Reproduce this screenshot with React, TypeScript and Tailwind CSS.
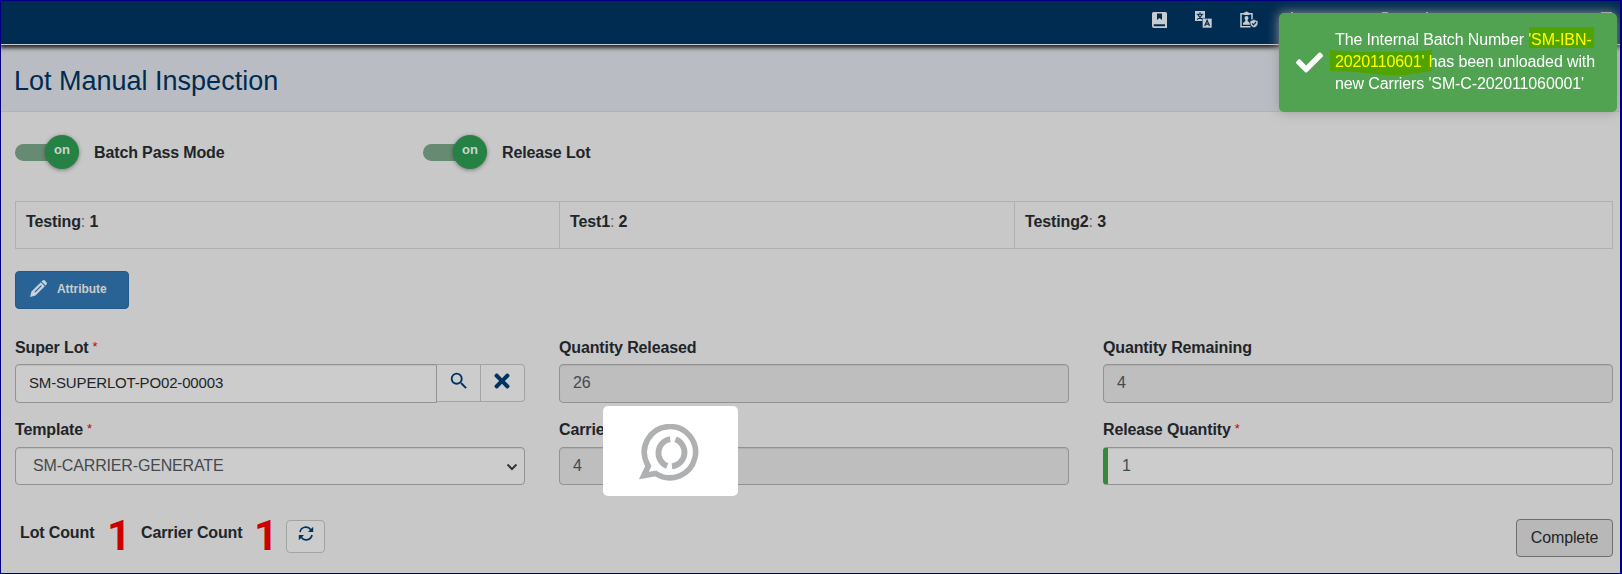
import type { ReactNode } from "react";
import { FaCheck, FaTimes } from "react-icons/fa";
import { MdSearch } from "react-icons/md";

function BookIcon() {
  return (
    <svg width="15" height="16" viewBox="0 0 15 16" fill="none">
      <path fillRule="evenodd" fill="#c6ccd0" d="M1.500 0H13.500A1.500 1.500 0 0 1 15 1.500V16H2A2 2 0 0 1 0 14V1.500A1.500 1.500 0 0 1 1.500 0ZM5 1.500V8L7.500 6L10 8V1.500ZM2.500 12.300A.9 .9 0 0 0 2.500 14.200H13V12.300Z" />
    </svg>
  );
}

function TranslateIcon() {
  return (
    <svg width="17" height="17" viewBox="0 0 17 17" fill="none">
      <path fill="#c6ccd0" d="M0 0H10V10H0Z" />
      <path stroke="#002c51" strokeWidth="1.1" d="M5 1.300V3M1.700 3.300H8.300M3 3.800C4 6 5.500 7.500 8 8.400M7 3.800C6 6 4.500 7.500 2 8.400" />
      <path fill="#c6ccd0" stroke="#002c51" strokeWidth="0.6" d="M7.300 7.300H17V17H7.300Z" />
      <path stroke="#002c51" strokeWidth="1.2" d="M9.700 15L12.100 9.300L14.500 15M10.500 13.200H13.700" />
    </svg>
  );
}

function ClipboardIcon() {
  return (
    <svg width="18" height="17" viewBox="0 0 18 17" fill="none">
      <path stroke="#c6ccd0" strokeWidth="1.500" d="M10.500 15.700H1V2.700H12V8.500" />
      <path fill="#c6ccd0" d="M3.800 1.500H5A1.600 1.600 0 0 1 8 1.500H9.200V4H3.800Z" />
      <circle cx="6.500" cy="7" r="2" fill="#c6ccd0" />
      <path fill="#c6ccd0" d="M5.400 8H7.600V10L10 12V13.800H3V12L5.400 10Z" />
      <path fill="#c6ccd0" stroke="#002c51" strokeWidth=".6" d="M14 8.500L18 10V12C18 14.400 16.300 15.800 14 16.700C11.700 15.800 10 14.400 10 12V10Z" />
      <path stroke="#002c51" strokeWidth="1.200" d="M12 12.300L13.500 13.800L16.100 11" />
    </svg>
  );
}

function PencilIcon() {
  return (
    <svg width="17" height="17" viewBox="0 0 17 17">
      <path fill="#c9d3dc" d="M0 17L1.500 11.500L10.800 2.200L14.800 6.200L5.500 15.500Z" />
      <path fill="#c9d3dc" d="M11.500 1.500L12.300 .7C13.200 -.1 14.300 -.1 15.100 .7L16.300 1.900C17.100 2.700 17.100 3.800 16.300 4.700L15.500 5.500Z" />
      <path stroke="#296395" strokeWidth="1.200" d="M4.800 12.200L11.400 5.600" />
    </svg>
  );
}

function RefreshIcon() {
  return (
    <svg width="16" height="15" viewBox="0 0 16 15" fill="none">
      <path stroke="#003263" strokeWidth="1.700" d="M2 6A6 6 0 0 1 12.800 3.700M14 9A6 6 0 0 1 3.200 11.300" />
      <path fill="#003263" d="M15.200 .8V6H10ZM.8 14.200V9H6Z" />
    </svg>
  );
}

function SpinnerMark() {
  return (
    <svg width="60" height="58" viewBox="0 0 60 58" fill="none" className="mt-[3px] -ml-[3px]">
      <path stroke="#aeb0b2" strokeWidth="5.600" d="M6.900 38.900A25.600 25.600 0 1 1 16 49.500L4 51.500L8.600 42Z" transform="translate(0.800 0)" />
      <g stroke="#aeb0b2" strokeWidth="5.800">
        <path d="M31.200 15.200A14 14 0 0 0 28.200 42" />
        <path d="M36.500 15.300A14 14 0 0 1 33 42.300" />
      </g>
    </svg>
  );
}

function Switch({ label }: { label: string }) {
  return (
    <div className="flex items-center">
      <div className="flex h-[17px] w-16 items-center justify-end rounded-full bg-[#678b72]">
        <div className="flex size-[34px] shrink-0 items-center justify-center rounded-full bg-[#258144] pb-[6px] text-[13px] leading-none font-bold tracking-normal text-[#cbd4ce] shadow-[0_1px_4px_rgba(0,0,0,0.4)]">
          on
        </div>
      </div>
      <span className="mt-px ml-[15px] font-bold">{label}</span>
    </div>
  );
}

function Field({ label, required, children }: { label: string; required?: boolean; children: ReactNode }) {
  return (
    <div className="flex flex-col">
      <div className="flex h-6 font-bold">
        {label}
        {required && <span className="ml-1 text-[13px] leading-[21px] font-normal text-[#cc0000]">*</span>}
      </div>
      {children}
    </div>
  );
}

function Stat({ name, value }: { name: string; value: string }) {
  return (
    <>
      <b>{name}</b>
      <span className="text-[#666666]">: </span>
      <b>{value}</b>
    </>
  );
}

const inputBase =
  "flex items-center rounded-[4px] border border-[#929292] pb-px text-[#444a4f] shadow-[inset_0_1px_1px_rgba(0,0,0,0.075)]";

const bigCount = "w-[35px] pl-px font-['Roboto',sans-serif] text-[42px] leading-[33px] font-bold text-[#cc0000]";

export default function App() {
  return (
    <div className="relative flex h-[574px] w-[1622px] flex-col overflow-hidden border border-r-2 border-[#000080] bg-[#c8c8c8] font-['Liberation_Sans',Arial,sans-serif] text-[16px] leading-6 tracking-[-0.13px] text-[#212529]">
      <header className="z-10 flex h-11 shrink-0 border-b border-[#cccccc] bg-[#002c51] pl-[1151px] shadow-[0_2px_4px_1px_rgba(0,0,0,0.8)]">
        <div className="flex items-start gap-[28px] pt-[10px]">
          <div className="pt-px"><BookIcon /></div>
          <TranslateIcon />
          <ClipboardIcon />
        </div>
      </header>

      <section className="flex h-[67px] shrink-0 items-center border-b border-[#aeb3ba] bg-[#b9bdc3] pt-[5px] pl-[13px]">
        <h1 className="text-[27px] leading-8 tracking-normal text-[#002b50]">Lot Manual Inspection</h1>
      </section>

      <main className="flex flex-1 flex-col pr-[7px] pl-[14px]">
        <div className="flex h-[89px] pt-7">
          <div className="flex h-6 w-[408px] items-center"><Switch label="Batch Pass Mode" /></div>
          <div className="flex h-6 items-center"><Switch label="Release Lot" /></div>
        </div>

        <div className="flex h-12 border border-[#b0b0b0]">
          <div className="w-[544px] border-r border-[#b0b0b0] pt-2 pl-[10px]"><Stat name="Testing" value="1" /></div>
          <div className="w-[455px] border-r border-[#b0b0b0] pt-2 pl-[10px]"><Stat name="Test1" value="2" /></div>
          <div className="pt-2 pl-[10px]"><Stat name="Testing2" value="3" /></div>
        </div>

        <button className="mt-[22px] flex h-[38px] w-[114px] shrink-0 items-center rounded-[4px] border border-[#255a88] bg-[#296395] pb-[3px] pl-[14px] text-[12px] font-bold tracking-[-0.05px] text-[#cccccc]">
          <PencilIcon />
          <span className="mt-px ml-[10px]">Attribute</span>
        </button>

        <div className="mt-[27px] grid grid-cols-[510px_510px_510px] justify-between">
          <Field label="Super Lot" required>
            <div className="mt-1 flex h-[39px] items-start">
              <div className="flex h-[39px] w-[422px] items-center rounded-l-[4px] border border-[#929292] bg-[#cccccc] pb-[2px] pl-[13px] text-[15px] tracking-[-0.16px] text-[#212529] shadow-[inset_0_1px_1px_rgba(0,0,0,0.075)]">
                SM-SUPERLOT-PO02-00003
              </div>
              <button className="flex h-[38px] w-11 items-center justify-center border-y border-r border-[#a3a3a3] bg-[#cccccc] pb-1 text-[#003263]">
                <MdSearch size={22} />
              </button>
              <button className="flex h-[38px] w-11 items-center justify-center rounded-r-[4px] border-y border-r border-[#a3a3a3] bg-[#cccccc] pr-px pb-1 text-[#003263]">
                <FaTimes size={22} />
              </button>
            </div>
          </Field>
          <Field label="Quantity Released">
            <div className={`${inputBase} mt-1 h-[39px] bg-[#bebebe] pl-[13px]`}>26</div>
          </Field>
          <Field label="Quantity Remaining">
            <div className={`${inputBase} mt-1 h-[39px] bg-[#bebebe] pl-[13px]`}>4</div>
          </Field>
        </div>

        <div className="mt-[15px] grid grid-cols-[510px_510px_510px] justify-between">
          <Field label="Template" required>
            <div className={`${inputBase} mt-[5px] h-[38px] justify-between bg-[#cccccc] pr-[6px] pl-[17px]`}>
              <span className="tracking-[-0.16px]">SM-CARRIER-GENERATE</span>
              <svg width="12" height="8" viewBox="0 0 12 8" fill="none" className="mt-[2px]">
                <path d="M1.500 1.500L6 6L10.500 1.500" stroke="#33373a" strokeWidth="2" />
              </svg>
            </div>
          </Field>
          <Field label="Carrier">
            <div className={`${inputBase} mt-[5px] h-[38px] bg-[#bebebe] pl-[13px]`}>4</div>
          </Field>
          <Field label="Release Quantity" required>
            <div className={`${inputBase} mt-[5px] h-[38px] border-l-[5px] border-l-[#37893a] bg-[#cccccc] pl-[14px]`}>1</div>
          </Field>
        </div>

        <div className="mt-[34px] flex items-start">
          <span className="mt-[2px] ml-[5px] w-[86px] font-bold">Lot Count</span>
          <span className={bigCount}>1</span>
          <span className="mt-[2px] w-[112px] font-bold">Carrier Count</span>
          <span className={bigCount}>1</span>
          <button className="mt-px -ml-[2px] flex h-[33px] w-[39px] items-start justify-center rounded-[4px] border border-[#a3a3a3] bg-[#cccccc] pt-[5px]">
            <RefreshIcon />
          </button>
          <button className="ml-auto flex h-[38px] w-[97px] items-center justify-center rounded-[4px] border border-[#6e6e6e] bg-[#b8b8b8]">
            Complete
          </button>
        </div>
      </main>

      <div className="absolute top-[405px] left-[602px] flex h-[90px] w-[135px] items-center justify-center rounded-[5px] bg-white">
        <SpinnerMark />
      </div>

      <svg className="absolute top-[10px] left-[1278px] z-10" width="338" height="3" viewBox="0 0 338 3" fill="#aeb6bd">
        <path d="M12 1H14V3H12ZM103 1H109V3H103ZM147 1H149V3H147ZM322 1H333V3H322Z" />
      </svg>

      <div className="absolute top-3 left-[1278px] z-20 flex h-[99px] w-[338px] items-center rounded-[5px] bg-[#51a351] pl-[17px] text-white shadow-[0_0_12px_#999999]">
        <FaCheck size={27} />
        <div className="mt-[-1px] ml-[12px] w-[275px] leading-[22px]">
          The Internal Batch Number 'SM-IBN-
          <br />
          2020110601' has been unloaded with
          <br />
          new Carriers 'SM-C-202011060001'
        </div>
        <svg className="absolute top-[14px] left-[51px] mix-blend-multiply" width="266" height="51" viewBox="0 0 266 51" fill="#ffff00">
          <path d="M199 0H264V21H199ZM0 23L25 25H75L102 23V44L75 48H55L25 45L0 44Z" />
        </svg>
      </div>
    </div>
  );
}
